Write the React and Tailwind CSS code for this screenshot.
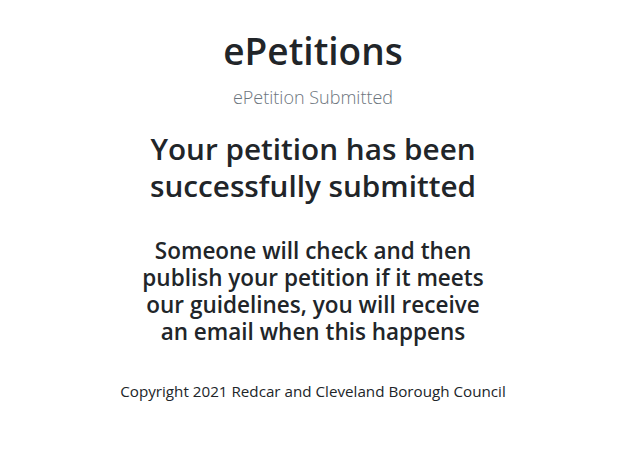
export default function App() {
  return (
    <div className="min-h-[449px] bg-white text-[#212529] font-['Open_Sans',sans-serif] text-center">
      <main className="pt-[29px] flex flex-col items-center">
        <h1 className="text-[37px] font-semibold leading-[1.2]">ePetitions</h1>
        <p className="mt-[11px] text-[18px] font-light text-[#6c757d] leading-[1.5]">ePetition Submitted</p>
        <h2 className="mt-[19px] text-[29.7px] font-semibold leading-[37px]">
          Your petition has been
          <br />
          successfully submitted
        </h2>
        <h4 className="mt-[33px] text-[22.5px] font-semibold leading-[27px]">
          Someone will check and then
          <br />
          publish your petition if it meets
          <br />
          our guidelines, you will receive
          <br />
          an email when this happens
        </h4>
        <footer className="mt-[35px] text-[15.2px] leading-[1.5]">
          Copyright 2021 Redcar and Cleveland Borough Council
        </footer>
      </main>
    </div>
  );
}
